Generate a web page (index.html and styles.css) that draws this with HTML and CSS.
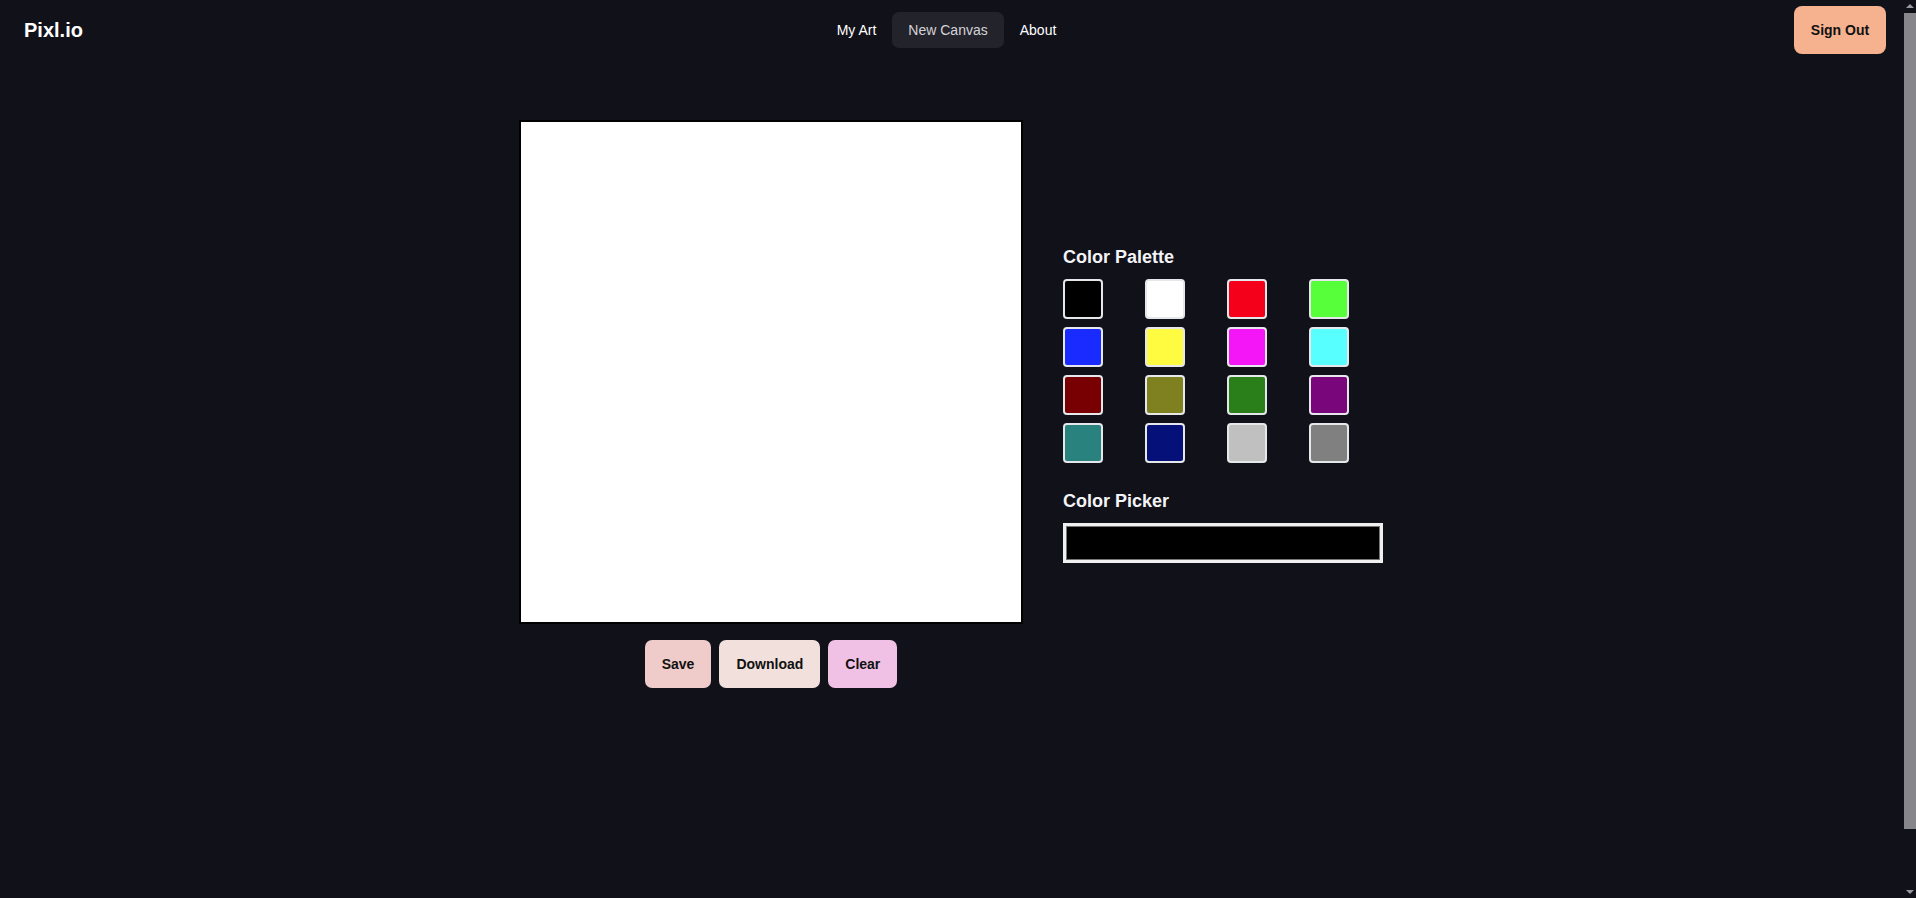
FILE: index.html
```html
<!DOCTYPE html>
<html lang="en">
<head>
<meta charset="utf-8">
<title>Pixl.io</title>
<link rel="stylesheet" href="styles.css">
</head>
<body>
<header class="topbar">
  <div class="logo">Pixl.io</div>
  <nav class="nav">
    <a class="nav-link" href="#">My Art</a>
    <a class="nav-link active" href="#">New Canvas</a>
    <a class="nav-link" href="#">About</a>
  </nav>
  <button class="signout">Sign Out</button>
</header>
<main class="workspace">
  <div class="studio">
    <section class="canvas-col">
      <div class="canvas"></div>
      <div class="actions">
        <button class="btn btn-save">Save</button>
        <button class="btn btn-download">Download</button>
        <button class="btn btn-clear">Clear</button>
      </div>
    </section>
    <aside class="tools">
      <h2 class="tools-title">Color Palette</h2>
      <div class="palette">
        <div class="swatch" style="background:#000000"></div>
        <div class="swatch" style="background:#ffffff"></div>
        <div class="swatch" style="background:#f5001a"></div>
        <div class="swatch" style="background:#57ff3b"></div>
        <div class="swatch" style="background:#1a2bff"></div>
        <div class="swatch" style="background:#fffb40"></div>
        <div class="swatch" style="background:#f516f8"></div>
        <div class="swatch" style="background:#57ffff"></div>
        <div class="swatch" style="background:#780003"></div>
        <div class="swatch" style="background:#7f8020"></div>
        <div class="swatch" style="background:#2a7f1b"></div>
        <div class="swatch" style="background:#79067b"></div>
        <div class="swatch" style="background:#2a827f"></div>
        <div class="swatch" style="background:#061079"></div>
        <div class="swatch" style="background:#c0c0c0"></div>
        <div class="swatch" style="background:#808080"></div>
      </div>
      <h2 class="tools-title picker-title">Color Picker</h2>
      <input class="picker" type="color" value="#000000">
    </aside>
  </div>
</main>
<div class="scrollbar" aria-hidden="true">
  <div class="sb-arrow sb-up"></div>
  <div class="sb-track"><div class="sb-thumb"></div></div>
  <div class="sb-arrow sb-down"></div>
</div>
</body>
</html>
```
FILE: styles.css
```css
html {
  background: #11111a;
}
body {
  margin: 0 12px 0 0;
  background: #11111a;
  color: #ffffff;
  font-family: "Liberation Sans", Arial, sans-serif;
}
.topbar {
  height: 60px;
  box-sizing: border-box;
  padding: 0 18px 0 24px;
  display: flex;
  align-items: center;
  justify-content: space-between;
}
.logo {
  font-size: 20px;
  font-weight: 700;
  width: 59px;
  margin-right: 16px;
}
.nav {
  display: flex;
  align-items: center;
}
.nav-link {
  color: #ffffff;
  text-decoration: none;
  font-size: 14px;
  line-height: 20px;
  padding: 8px 16px;
  border-radius: 7px;
}
.nav-link.active {
  background: #23232b;
  color: #d4d4d8;
}
.signout {
  font-family: inherit;
  font-size: 14px;
  font-weight: 700;
  color: #111111;
  background: #f6b18f;
  border: none;
  border-radius: 8px;
  width: 92px;
  height: 48px;
  padding: 0;
}
.workspace {
  padding: 60px 2px 200px 0;
  display: flex;
  justify-content: center;
}
.studio {
  display: flex;
  align-items: center;
  gap: 40px;
}
.canvas-col {
  display: flex;
  flex-direction: column;
  align-items: center;
  gap: 16px;
}
.canvas {
  width: 500px;
  height: 500px;
  background: #ffffff;
  border: 2px solid #000000;
}
.actions {
  display: flex;
  gap: 8px;
}
.btn {
  font-family: inherit;
  font-size: 14px;
  font-weight: 700;
  color: #111111;
  border: none;
  border-radius: 7px;
  height: 48px;
  padding: 0 17px;
}
.btn-save {
  background: #efcbca;
}
.btn-download {
  background: #f2e0dd;
}
.btn-clear {
  background: #f0c1e5;
}
.tools {
  width: 320px;
  display: flex;
  flex-direction: column;
  margin-bottom: 2px;
}
.tools-title {
  margin: 0 0 8px;
  font-size: 18px;
  line-height: 28px;
  font-weight: 700;
  color: #f3f4f6;
}
.picker-title {
  margin-top: 24px;
}
.palette {
  display: grid;
  grid-template-columns: repeat(4, 1fr);
  gap: 8px;
}
.swatch {
  width: 40px;
  height: 40px;
  box-sizing: border-box;
  border: 2px solid #e5e7eb;
  border-radius: 4px;
}
.picker {
  -webkit-appearance: none;
  appearance: none;
  width: 320px;
  height: 40px;
  box-sizing: border-box;
  padding: 0;
  margin: 0;
  border: 3px solid #f0f0f0;
  background: #f0f0f0;
}
.picker::-webkit-color-swatch-wrapper {
  padding: 0;
}
.picker::-webkit-color-swatch {
  border: 1px solid #767676;
}
.scrollbar {
  position: fixed;
  top: 0;
  right: 0;
  width: 12px;
  height: 100vh;
  background: #11111a;
  display: flex;
  flex-direction: column;
}
.sb-arrow {
  height: 12px;
  display: flex;
  justify-content: center;
  align-items: center;
}
.sb-up::before,
.sb-down::before {
  content: "";
  border-left: 4px solid transparent;
  border-right: 4px solid transparent;
}
.sb-up::before {
  border-bottom: 4px solid #9a9a9e;
}
.sb-down::before {
  border-top: 4px solid #9a9a9e;
}
.sb-track {
  flex: 1;
  padding-top: 1px;
}
.sb-thumb {
  height: 816px;
  background: #87878b;
}
```
